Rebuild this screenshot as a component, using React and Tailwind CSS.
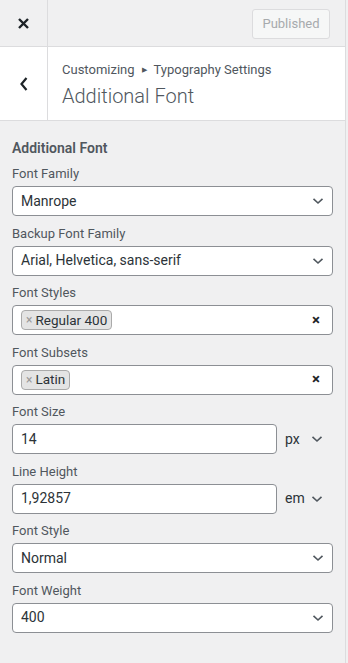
import React from "react";

const Chevron = () => (
  <svg width="12" height="8" viewBox="0 0 12 8" className="shrink-0">
    <path d="M1.5 1.8 L6 6 L10.5 1.8" fill="none" stroke="#50575e" strokeWidth="1.6" />
  </svg>
);

const Label = ({ children }) => (
  <div className="h-[18px] leading-[18px] text-[13px] text-[#50575e] mb-[3px]">{children}</div>
);

const Select = ({ value }) => (
  <div className="h-[30px] bg-white border border-[#8c8f94] rounded-[4px] flex items-center pl-[8px] pr-[8px] text-[14px] text-[#2c3338]">
    <span className="flex-1">{value}</span>
    <Chevron />
  </div>
);

const Chips = ({ value }) => (
  <div className="h-[30px] bg-white border border-[#8c8f94] rounded-[4px] flex items-center pl-[8px] pr-[12px] text-[14px] text-[#2c3338]">
    <div className="flex-1 flex">
      <span className="h-[20px] flex items-center bg-[#e4e4e4] border border-[#aaaaaa] rounded-[4px] pl-[4px] pr-[4px] text-[13.5px] text-[#2c3338]">
        <span className="text-[#999] text-[12px] mr-[3px]">×</span>
        {value}
      </span>
    </div>
    <span className="text-[15px] font-bold text-[#1d2327]">×</span>
  </div>
);

const NumberInput = ({ value, unit }) => (
  <div className="flex items-center">
    <div className="w-[265px] h-[30px] bg-white border border-[#8c8f94] rounded-[4px] flex items-center pl-[8px] text-[14px] text-[#2c3338]">
      {value}
    </div>
    <span className="ml-[8px] w-[26px] text-[14px] text-[#2c3338]">{unit}</span>
    <Chevron />
  </div>
);

const Group = ({ label, children }) => (
  <div className="mb-[8.5px]">
    <Label>{label}</Label>
    {children}
  </div>
);

export default function App() {
  return (
    <div className="w-[348px] h-[663px] flex bg-[#f0f0f1] overflow-hidden font-[Roboto,'Noto_Sans',sans-serif]">
      <div className="w-[346px] border-r border-[#dcdcde] flex flex-col">
        <div className="h-[47px] flex border-b border-[#dcdcde] bg-[#f0f0f1]">
          <div className="w-[48px] border-r border-[#dcdcde] flex items-center justify-center">
            <svg width="13" height="13" viewBox="0 0 13 13">
              <path d="M2 2 L11 11 M11 2 L2 11" stroke="#1d2327" strokeWidth="2.4" />
            </svg>
          </div>
          <div className="flex-1 flex items-center justify-end pr-[15px]">
            <div className="h-[30px] w-[78px] mt-[2px] rounded-[3px] border border-[#dcdcde] bg-[#f6f7f7] flex items-center justify-center text-[13px] text-[#a7aaad]">
              Published
            </div>
          </div>
        </div>
        <div className="h-[74px] flex border-b border-[#dcdcde] bg-white">
          <div className="w-[48px] border-r border-[#dcdcde] flex items-center justify-center">
            <svg width="10" height="16" viewBox="0 0 10 16">
              <path d="M7.5 2 L2.5 8 L7.5 14" fill="none" stroke="#1d2327" strokeWidth="2.2" />
            </svg>
          </div>
          <div className="flex-1 pl-[14px] pt-[13px]">
            <div className="text-[13px] leading-[20px] text-[#50575e] flex items-center">
              Customizing
              <span className="text-[7px] mx-[7px] text-[#50575e]">▶</span>
              Typography Settings
            </div>
            <div className="text-[20px] leading-[28px] font-light text-[#50575e] mt-[2px]">Additional Font</div>
          </div>
        </div>
        <div className="px-[12px] pt-[17px]">
          <div className="text-[14px] leading-[20px] font-semibold text-[#50575e] mb-[7px]">Additional Font</div>
          <Group label="Font Family"><Select value="Manrope" /></Group>
          <Group label="Backup Font Family"><Select value="Arial, Helvetica, sans-serif" /></Group>
          <Group label="Font Styles"><Chips value="Regular 400" /></Group>
          <Group label="Font Subsets"><Chips value="Latin" /></Group>
          <Group label="Font Size"><NumberInput value="14" unit="px" /></Group>
          <Group label="Line Height"><NumberInput value="1,92857" unit="em" /></Group>
          <Group label="Font Style"><Select value="Normal" /></Group>
          <Group label="Font Weight"><Select value="400" /></Group>
        </div>
      </div>
    </div>
  );
}
